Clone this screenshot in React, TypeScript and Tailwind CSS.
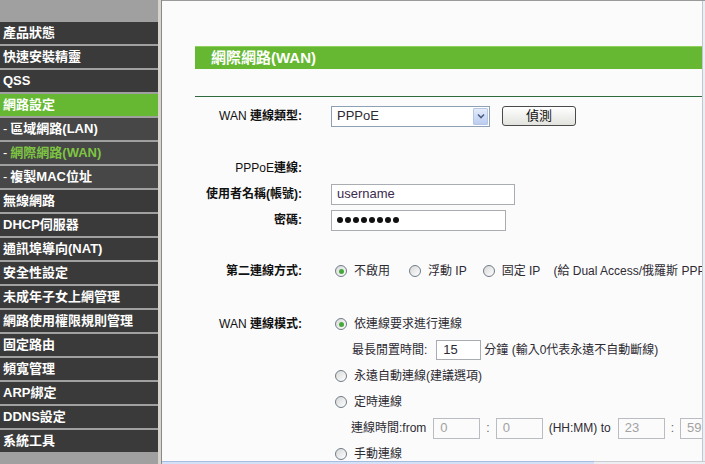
import React from 'react';

type MenuItem = { label: string; sub?: boolean; active?: boolean; current?: boolean };

const menu: MenuItem[] = [
  { label: '產品狀態' },
  { label: '快速安裝精靈' },
  { label: 'QSS' },
  { label: '網路設定', active: true },
  { label: '區域網路(LAN)', sub: true },
  { label: '網際網路(WAN)', sub: true, current: true },
  { label: '複製MAC位址', sub: true },
  { label: '無線網路' },
  { label: 'DHCP伺服器' },
  { label: '通訊埠導向(NAT)' },
  { label: '安全性設定' },
  { label: '未成年子女上網管理' },
  { label: '網路使用權限規則管理' },
  { label: '固定路由' },
  { label: '頻寬管理' },
  { label: 'ARP綁定' },
  { label: 'DDNS設定' },
  { label: '系統工具' },
];

function Radio({ checked }: { checked?: boolean }) {
  return (
    <span className="ml-[4px] mr-[7px] flex h-[12px] w-[12px] shrink-0 items-center justify-center rounded-full border border-[#6f7c88] bg-gradient-to-br from-[#d8d8d8] to-white">
      {checked && <span className="h-[5px] w-[5px] rounded-full bg-[#45a83a]" />}
    </span>
  );
}

function Row({ label, className, children }: { label?: React.ReactNode; className: string; children?: React.ReactNode }) {
  return (
    <div className={`flex items-center whitespace-nowrap ${className}`}>
      <div className="w-[107px] shrink-0 text-right text-[12px] font-bold text-[#111]">{label}</div>
      <div className="ml-[29px] flex items-center text-[12px] text-[#2d2a33]">{children}</div>
    </div>
  );
}

function TimeBox({ value }: { value: string }) {
  return (
    <div className="flex h-[21px] w-[47px] items-center border border-[#b9bcc0] bg-[#fbfbfb] pl-[6px] text-[13px] text-[#a2a2a2]">
      {value}
    </div>
  );
}

export default function App() {
  return (
    <div className="flex h-[464px] w-[705px] overflow-hidden bg-[#fbfbfb] font-['Liberation_Sans','Noto_Sans_CJK_TC',sans-serif]">
      {/* 左側選單 */}
      <aside className="w-[158px] shrink-0 bg-[#a0a0a0] pt-[20px]">
        {menu.map((item) => (
          <div
            key={item.label}
            className={`mt-[2px] flex h-[22px] items-center whitespace-nowrap pl-[3px] text-[13px] font-bold ${
              item.active ? 'bg-[#66b832] text-white' : item.sub ? 'bg-[#474747] text-white' : 'bg-[#3a3a3a] text-white'
            }`}
          >
            {item.sub && <span className="mr-[3px] font-normal">-</span>}
            <span className={item.current ? 'text-[#7ec443]' : ''}>{item.label}</span>
          </div>
        ))}
      </aside>

      {/* 框架分隔 */}
      <div className="w-[3px] shrink-0 bg-[#d8d4cb]" />
      <div className="w-[1px] shrink-0 bg-[#8a8a8a]" />

      {/* 內容 */}
      <main className="relative flex-1 overflow-hidden border-t border-[#9a9a9a]">
        <div className="pl-[33px] pr-[3px]">
          <div className="mt-[45px] flex h-[23px] items-center border-t border-[#8fd05f] bg-[#66b832] pl-[16px] text-[15px] font-bold text-white">
            網際網路(WAN)
          </div>
          <div className="mt-[27px] h-[1px] bg-[#2f6a3e]" />

          <Row label={<><span className="font-normal">WAN</span> 連線類型:</>} className="mt-[7px] h-[24px]">
            <div className="flex h-[21px] w-[159px] items-center justify-between border border-[#8ea0b4] bg-white pl-[5px] text-[13px]">
              <span>PPPoE</span>
              <span className="mr-[1px] flex h-[17px] w-[15px] items-center justify-center rounded-[1px] border border-[#b5c6e6] bg-gradient-to-b from-[#e4ecfb] to-[#bccdf0]">
                <svg width="8" height="6" viewBox="0 0 8 6">
                  <path d="M1 1.5 L4 4.5 L7 1.5" fill="none" stroke="#4d6185" strokeWidth="1.6" />
                </svg>
              </span>
            </div>
            <button className="ml-[12px] flex h-[20px] w-[74px] items-center justify-center rounded-[3px] border border-[#4a4a4a] bg-gradient-to-b from-white to-[#e2e2de] text-[13px] text-[#111]">
              偵測
            </button>
          </Row>

          <Row label={<><span className="font-normal">PPPoE</span>連線:</>} className="mt-[27px] h-[26px]" />
          <Row label="使用者名稱(帳號):" className="h-[26px]">
            <div className="flex h-[21px] w-[184px] items-center border border-[#a9adb2] bg-white pl-[5px] text-[13px] text-[#3c2a4d]">
              username
            </div>
          </Row>
          <Row label="密碼:" className="h-[26px]">
            <div className="flex h-[21px] w-[175px] items-center gap-[2px] border border-[#a9adb2] bg-white pl-[5px]">
              {Array.from({ length: 8 }).map((_, i) => (
                <span key={i} className="h-[6px] w-[6px] rounded-full bg-[#111]" />
              ))}
            </div>
          </Row>

          <Row label="第二連線方式:" className="mt-[25px] h-[26px]">
            <Radio checked />
            <span className="mr-[15px]">不啟用</span>
            <Radio />
            <span className="mr-[12px]">浮動 IP</span>
            <Radio />
            <span>固定 IP</span>
            <span className="ml-[13px]">(給 Dual Access/俄羅斯 PPPoE)</span>
          </Row>

          <Row label={<><span className="font-normal">WAN</span> 連線模式:</>} className="mt-[27px] h-[26px]">
            <Radio checked />
            <span>依連線要求進行連線</span>
          </Row>
          <Row className="h-[26px]">
            <span className="ml-[21px]">最長閒置時間:</span>
            <div className="ml-[9px] flex h-[20px] w-[45px] items-center border border-[#a9adb2] bg-white pl-[6px] text-[13px]">15</div>
            <span className="ml-[3px]">分鐘 (輸入0代表永遠不自動斷線)</span>
          </Row>
          <Row className="h-[26px]">
            <Radio />
            <span>永遠自動連線(建議選項)</span>
          </Row>
          <Row className="h-[26px]">
            <Radio />
            <span>定時連線</span>
          </Row>
          <Row className="h-[26px]">
            <span className="ml-[20px]">連線時間:from</span>
            <span className="ml-[7px]"><TimeBox value="0" /></span>
            <span className="mx-[6px] text-[#666]">:</span>
            <TimeBox value="0" />
            <span className="ml-[6px]">(HH:MM) to</span>
            <span className="ml-[7px]"><TimeBox value="23" /></span>
            <span className="mx-[6px] text-[#666]">:</span>
            <TimeBox value="59" />
          </Row>
          <Row className="h-[26px]">
            <Radio />
            <span>手動連線</span>
          </Row>
        </div>

        {/* 捲軸邊緣 */}
        <div className="absolute right-0 top-0 h-full w-[3px] border-l border-[#c3c8d0] bg-[#eceef2]" />
        <div className="absolute bottom-0 left-0 flex h-[3px] w-full">
          <div className="w-[432px] border-t border-[#a9bde0] bg-[#d3e0f6]" />
          <div className="flex-1 border-t border-[#c9ccd2] bg-[#eceef2]" />
        </div>
      </main>
    </div>
  );
}
